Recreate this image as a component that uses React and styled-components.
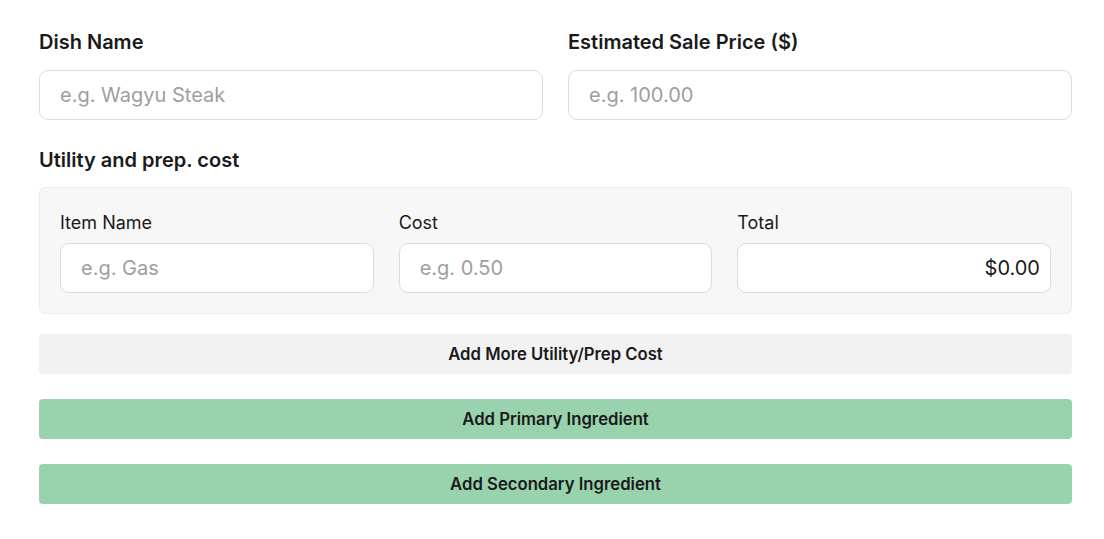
import React from "react";
import styled, { createGlobalStyle } from "styled-components";

const Global = createGlobalStyle`
  * { box-sizing: border-box; }
  body {
    margin: 0;
    background: #fff;
    font-family: Inter, "Noto Sans", sans-serif;
    color: #1a1a1a;
  }
`;

const Page = styled.div`
  width: 1033px;
  margin-left: 39px;
  padding-top: 28px;
  display: flex;
  flex-direction: column;
`;

const Row = styled.div`
  display: grid;
  grid-template-columns: repeat(${(p) => p.$cols}, 1fr);
  gap: ${(p) => p.$gap || 25}px;
`;

const Field = styled.div`
  display: flex;
  flex-direction: column;
`;

const Label = styled.label`
  font-size: 20px;
  font-weight: 600;
  line-height: 28px;
  margin-bottom: 14px;
  color: #1a1a1a;
`;

const SmallLabel = styled.label`
  font-size: 18px;
  font-weight: 400;
  line-height: 26px;
  margin-bottom: 7px;
  color: #1a1a1a;
`;

const Input = styled.input`
  height: 50px;
  width: 100%;
  border: 1px solid #dcdcdc;
  border-radius: 9px;
  padding: 0 ${(p) => (p.$right ? 10 : 20)}px 0 20px;
  font-family: Inter, "Noto Sans", sans-serif;
  font-size: 20px;
  color: #1a1a1a;
  background: #fff;
  text-align: ${(p) => (p.$right ? "right" : "left")};
  outline: none;
  &::placeholder { color: #9e9e9e; }
`;

const SectionTitle = styled.div`
  font-size: 20px;
  font-weight: 600;
  line-height: 28px;
  margin-top: 26px;
  margin-bottom: 13px;
`;

const Panel = styled.div`
  background: #f7f7f7;
  border: 1px solid #ececec;
  border-radius: 6px;
  padding: 22px 20px 20px 20px;
`;

const Button = styled.button`
  height: 40px;
  width: 100%;
  border: none;
  border-radius: 4px;
  background: ${(p) => (p.$green ? "#99d3ad" : "#f2f2f2")};
  font-family: Inter, "Noto Sans", sans-serif;
  font-size: 16.7px;
  font-weight: 600;
  color: #1a1a1a;
  margin-top: ${(p) => p.$mt}px;
  cursor: pointer;
`;

export default function App() {
  return (
    <>
      <Global />
      <Page>
        <Row $cols={2} $gap={25}>
          <Field>
            <Label>Dish Name</Label>
            <Input placeholder="e.g. Wagyu Steak" />
          </Field>
          <Field>
            <Label>Estimated Sale Price ($)</Label>
            <Input placeholder="e.g. 100.00" />
          </Field>
        </Row>
        <SectionTitle>Utility and prep. cost</SectionTitle>
        <Panel>
          <Row $cols={3} $gap={25}>
            <Field>
              <SmallLabel>Item Name</SmallLabel>
              <Input placeholder="e.g. Gas" />
            </Field>
            <Field>
              <SmallLabel>Cost</SmallLabel>
              <Input placeholder="e.g. 0.50" />
            </Field>
            <Field>
              <SmallLabel>Total</SmallLabel>
              <Input $right readOnly value="$0.00" />
            </Field>
          </Row>
        </Panel>
        <Button $mt={20}>Add More Utility/Prep Cost</Button>
        <Button $green $mt={25}>Add Primary Ingredient</Button>
        <Button $green $mt={25}>Add Secondary Ingredient</Button>
      </Page>
    </>
  );
}
